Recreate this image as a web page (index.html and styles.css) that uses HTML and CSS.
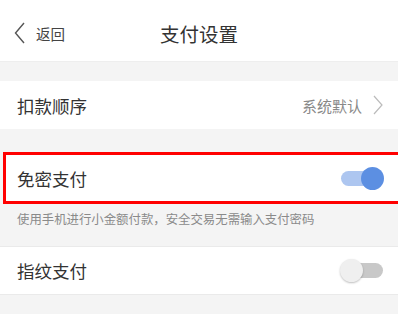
FILE: index.html
```html
<!DOCTYPE html>
<html lang="zh">
<head>
<meta charset="utf-8">
<link rel="stylesheet" href="styles.css">
</head>
<body>
<div class="page">
  <header class="topbar">
    <div class="back">
      <svg class="back-icon" width="12" height="22" viewBox="0 0 12 22"><path d="M10 1 L1.5 11 L10 21" fill="none" stroke="#555" stroke-width="1.4"/></svg>
      <span class="back-text">返回</span>
    </div>
    <div class="title">支付设置</div>
  </header>
  <div class="gap gap-top"></div>
  <div class="row">
    <span class="label">扣款顺序</span>
    <span class="value">系统默认
      <svg class="chev" width="10" height="20" viewBox="0 0 10 20"><path d="M1 1 L9 10 L1 19" fill="none" stroke="#bbb" stroke-width="1.2"/></svg>
    </span>
  </div>
  <div class="gap gap-mid"></div>
  <div class="highlight">
    <div class="row row-in">
      <span class="label">免密支付</span>
      <span class="toggle on"><span class="knob"></span></span>
    </div>
  </div>
  <div class="caption">使用手机进行小金额付款，安全交易无需输入支付密码</div>
  <div class="row row-last">
    <span class="label">指纹支付</span>
    <span class="toggle off"><span class="knob"></span></span>
  </div>
  <div class="gap gap-end"></div>
</div>
</body>
</html>
```
FILE: styles.css
```css
html, body {
  margin: 0;
  padding: 0;
  background: #f4f4f4;
  font-family: "Noto Sans CJK SC", "Noto Sans", sans-serif;
  color: #333;
}
.page {
  width: 398px;
  height: 314px;
  overflow: hidden;
  background: #f4f4f4;
}
.topbar {
  height: 61px;
  background: #fff;
  position: relative;
  display: flex;
  align-items: center;
  justify-content: center;
}
.back {
  position: absolute;
  left: 14px;
  top: 0;
  height: 61px;
  display: flex;
  align-items: center;
  gap: 10px;
  padding-top: 6px;
  box-sizing: border-box;
}
.back-icon { display: block; margin-top: -1px; }
.back-text {
  font-size: 14.5px;
  color: #444;
  margin-top: -1px;
}
.title {
  font-size: 19.5px;
  color: #333;
  margin-top: 6px;
}
.gap { background: #f4f4f4; }
.gap-top { height: 20px; border-top: 1px solid #eee; box-sizing: border-box; }
.gap-mid { height: 23px; }
.row {
  height: 48px;
  background: #fff;
  display: flex;
  align-items: center;
  justify-content: space-between;
  padding: 0 15px 0 17px;
  box-sizing: border-box;
}
.label {
  font-size: 17.5px;
  color: #333;
}
.value {
  display: flex;
  align-items: center;
  gap: 11px;
  font-size: 15px;
  color: #888;
}
.chev { display: block; }
.highlight {
  margin-left: 3px;
  width: 420px;
  border: 3px solid #f00;
  border-right: none;
}
.row-in {
  height: 46px;
  padding-left: 11px;
  width: 395px;
  padding-right: 18px;
}
.caption {
  height: 42px;
  line-height: 30px;
  font-size: 12.4px;
  color: #8a8a8a;
  padding-left: 17px;
  box-sizing: border-box;
}
.row-last {
  border-top: 1px solid #eaeaea;
  border-bottom: 1px solid #eaeaea;
  height: 49px;
}
.toggle {
  position: relative;
  width: 42px;
  height: 15px;
  border-radius: 8px;
  display: block;
}
.toggle .knob {
  position: absolute;
  top: -4px;
  width: 23px;
  height: 23px;
  border-radius: 50%;
}
.toggle.on { background: #adc6f0; }
.toggle.on .knob { right: -1px; background: #5c8fe2; }
.toggle.off { background: #c8c8c8; }
.toggle.off .knob { left: -1px; background: #efefef; box-shadow: 0 1px 2px rgba(0,0,0,0.25); }
.gap-end { height: 30px; }
```
